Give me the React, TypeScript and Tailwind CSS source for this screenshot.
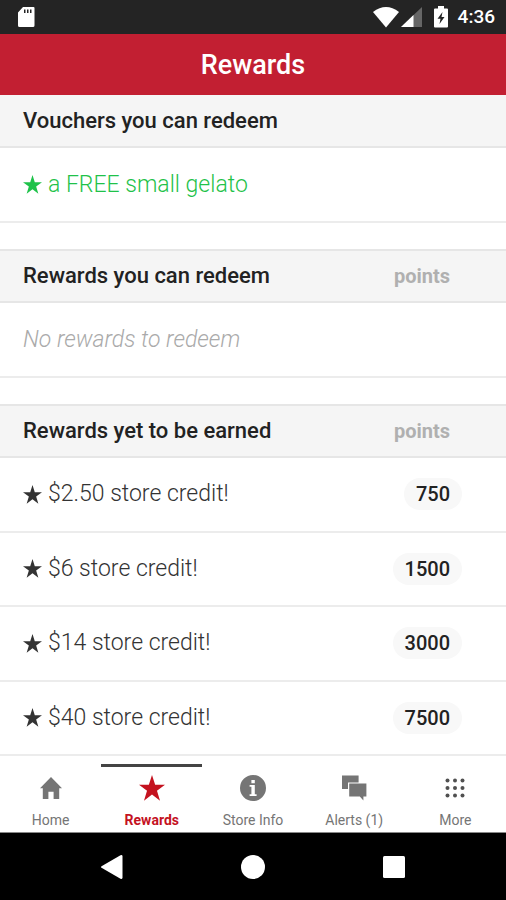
import React from 'react';

interface Reward {
  name: string;
  points: number;
}

interface Tab {
  label: string;
  icon: React.ReactNode;
}

const REWARDS: Reward[] = [
  { name: '$2.50 store credit!', points: 750 },
  { name: '$6 store credit!', points: 1500 },
  { name: '$14 store credit!', points: 3000 },
  { name: '$40 store credit!', points: 7500 }
];

const Star: React.FC<{ className: string }> = ({ className }) => (
  <svg viewBox="0 0 24 24" className={className} fill="currentColor" aria-hidden="true">
    <path d="M12 0l2.9 9H24l-7.4 5.5 2.8 9.2L12 18l-7.4 5.7 2.8-9.2L0 9h9.1z" />
  </svg>
);

const TABS: Tab[] = [
  {
    label: 'Home',
    icon: (
      <svg viewBox="0 0 26 26" className="size-[26px]" fill="currentColor" aria-hidden="true">
        <path d="M13 2L2 13.2h2.8V24h5.6v-7.2h5.2V24h5.6V13.2H24z" />
      </svg>
    )
  },
  { label: 'Rewards', icon: <Star className="size-[26px]" /> },
  {
    label: 'Store Info',
    icon: (
      <svg viewBox="0 0 26 26" className="size-[26px]" fill="currentColor" aria-hidden="true">
        <path
          fillRule="evenodd"
          d="M13 0a13 13 0 1 1 0 26 13 13 0 0 1 0-26zm-1.6 5v3.2h3.4V5zM9.6 10v1.8h1.8v7.4H9.6V21h7v-1.8h-1.8V10z"
        />
      </svg>
    )
  },
  {
    label: 'Alerts (1)',
    icon: (
      <svg viewBox="0 0 26 26" className="size-[26px]" fill="currentColor" aria-hidden="true">
        <path d="M1 .5h16.600v6.900H7v6.600H1z" />
        <path d="M8.2 8.500H25.4V21.500h-3V25.400L18.800 21.500H8.200z" />
      </svg>
    )
  },
  {
    label: 'More',
    icon: (
      <svg viewBox="0 0 26 26" className="size-[26px] text-[#505050]" fill="currentColor" aria-hidden="true">
        {[5.5, 13, 20.5].map(y => [5.5, 13, 20.5].map(x => <circle key={`${x}-${y}`} cx={x} cy={y} r="2" />))}
      </svg>
    )
  }
];

const StatusBar: React.FC = () => (
  <div className="flex h-[34px] items-center justify-between bg-[#242424] pl-[17px] pr-[11px] text-white">
    <svg viewBox="0 0 18 22" className="h-[22px] w-[18px]" fill="currentColor" aria-hidden="true">
      <path
        fillRule="evenodd"
        d="M6 1h10.5Q17.500 1 17.500 2v17.500q0 1.500-1.500 1.500H2.500Q1 21 1 19.500V6.500zM7 3.500v3.500h1.500V3.500zm3 0v3.500h1.500V3.500zm3 0v3.500h1.500V3.500z"
      />
    </svg>
    <div className="flex items-center">
      <svg viewBox="0 0 26 22" className="h-[22px] w-[26px]" fill="currentColor" aria-hidden="true">
        <path d="M0 6Q13-4 26 6L13 21.500z" />
      </svg>
      <svg viewBox="0 0 21 20" className="ml-[2px] h-[20px] w-[21px]" fill="currentColor" aria-hidden="true">
        <path d="M21 0v20H0z" opacity="0.300" />
        <path d="M12.500 8v12H0z" />
      </svg>
      <svg viewBox="0 0 14 22" className="ml-3 h-[22px] w-[14px]" fill="currentColor" aria-hidden="true">
        <path
          fillRule="evenodd"
          d="M4 0h6v2.500h3q1 0 1 1V20.500q0 1-1 1H1q-1 0-1-1V3.500q0-1 1-1h3zM8.500 6L3.500 12.800H6.500L5.500 18l5-7H7.500z"
        />
      </svg>
      <span className="ml-[10px] text-[19px] font-medium leading-6">4:36</span>
    </div>
  </div>
);

const SectionHeader: React.FC<{ title: string; showPoints?: boolean }> = ({ title, showPoints }) => (
  <div
    className={`flex items-center justify-between border-[#e6e6e6] bg-[#f5f5f5] pl-[23px] pr-14 ${
      showPoints ? 'h-[54px] border-y-2' : 'h-[53px] border-b-2'
    }`}
  >
    <h2 className="text-[22px] font-medium leading-7 text-[#222]">{title}</h2>
    {showPoints && <span className="text-[20px] font-bold leading-7 text-[#b0b0b0]">points</span>}
  </div>
);

export default function App() {
  return (
    <div className="flex min-h-screen flex-col bg-white font-['Roboto',sans-serif]">
      <StatusBar />
      <header className="flex h-[61px] items-center justify-center bg-[#c21f32]">
        <h1 className="text-[27px] font-medium leading-8 text-white">Rewards</h1>
      </header>

      <main className="flex flex-1 flex-col">
        <section className="mb-[26px]">
          <SectionHeader title="Vouchers you can redeem" />
          <div className="flex h-[75px] items-center gap-[6px] border-b-2 border-[#ececec] pl-[23px] text-[23px] font-light leading-7 text-[#1fc24a]">
            <Star className="size-[19px]" />
            <span>a FREE small gelato</span>
          </div>
        </section>

        <section className="mb-[26px]">
          <SectionHeader title="Rewards you can redeem" showPoints />
          <p className="flex h-[75px] items-center border-b-2 border-[#ececec] pl-[23px] text-[23px] font-light italic leading-7 text-[#aaa]">
            No rewards to redeem
          </p>
        </section>

        <section className="flex flex-1 flex-col">
          <SectionHeader title="Rewards yet to be earned" showPoints />
          <ul className="flex flex-1 flex-col">
            {REWARDS.map(reward => (
              <li
                key={reward.name}
                className="flex min-h-[74px] flex-1 items-center border-b-2 border-[#ececec] pl-[23px] pr-11 text-[#333]"
              >
                <Star className="size-[19px]" />
                <span className="ml-[6px] flex-1 text-[23px] font-light leading-7">{reward.name}</span>
                <span className="rounded-full bg-[#f8f8f8] px-3 py-[2px] text-[20px] font-medium leading-7 text-[#222]">
                  {reward.points}
                </span>
              </li>
            ))}
          </ul>
        </section>
      </main>

      <nav className="grid h-[77px] grid-cols-5 border-b border-[#888] bg-white pt-2">
        {TABS.map(tab => {
          const active = tab.label === 'Rewards';
          return (
            <button
              key={tab.label}
              type="button"
              aria-current={active ? 'page' : undefined}
              className={`flex flex-col items-center border-t-[3px] pt-2 text-[14px] leading-5 ${
                active ? 'border-[#444] font-bold text-[#c4121f]' : 'border-transparent text-[#757575]'
              }`}
            >
              {tab.icon}
              <span className="mt-[9px]">{tab.label}</span>
            </button>
          );
        })}
      </nav>

      <div className="flex h-[67px] items-center justify-center gap-[117px] bg-black text-white">
        <button type="button" aria-label="Back">
          <svg viewBox="0 0 24 24" className="size-6" fill="currentColor">
            <path d="M1.500 12.800Q.500 12 1.500 11.200L20.500.300Q22.500-.500 22.500 1.500v21q0 2-2 1.200z" />
          </svg>
        </button>
        <button type="button" aria-label="Home screen">
          <svg viewBox="0 0 24 24" className="size-6" fill="currentColor">
            <circle cx="12" cy="12" r="12" />
          </svg>
        </button>
        <button type="button" aria-label="Recent apps">
          <svg viewBox="0 0 24 24" className="size-6" fill="currentColor">
            <rect x="1" y="1" width="22" height="22" rx="1.500" />
          </svg>
        </button>
      </div>
    </div>
  );
}
